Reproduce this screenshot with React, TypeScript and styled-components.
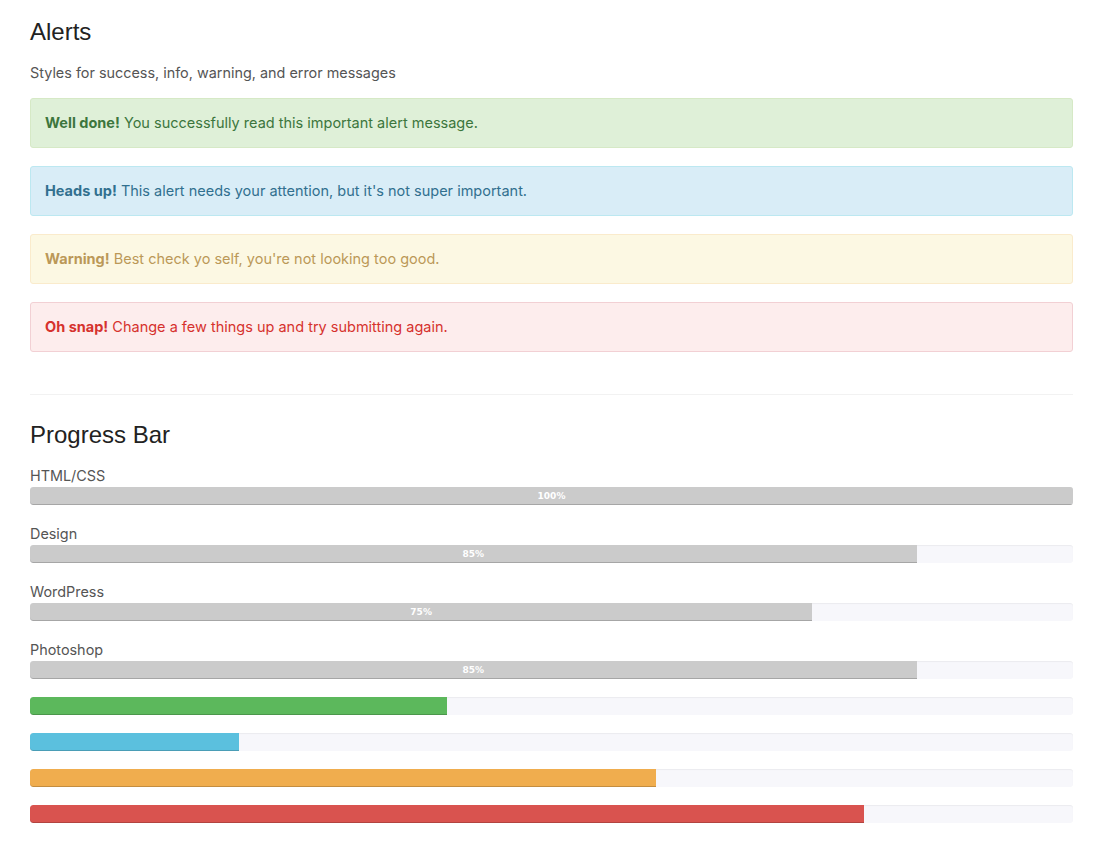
import React from 'react'
import styled, { createGlobalStyle } from 'styled-components'

const GlobalStyle = createGlobalStyle`
  html, body {
    margin: 0;
    padding: 0;
    background: #fff;
  }
  body {
    font-family: Inter, "Noto Sans", sans-serif;
    font-size: 14.5px;
    color: #555;
  }
`

type Tone = 'success' | 'info' | 'warning' | 'danger'

const tones: Record<Tone, { bg: string; border: string; text: string; bar: string }> = {
  success: { bg: '#dff0d8', border: '#d6e9c6', text: '#3c763d', bar: '#5cb85c' },
  info: { bg: '#d9edf7', border: '#bce8f1', text: '#31708f', bar: '#5bc0de' },
  warning: { bg: '#fcf8e3', border: '#faebcc', text: '#bb9858', bar: '#f0ad4e' },
  danger: { bg: '#fdeded', border: '#f2d0d4', text: '#d6322d', bar: '#d9534f' },
}

const Page = styled.div`
  padding: 14px 32px 40px 30px;
`

const Heading = styled.h2`
  font-family: "Liberation Sans", Arial, sans-serif;
  font-weight: 400;
  font-size: 24px;
  line-height: 36px;
  color: #222;
  margin: 0 0 13px;
`

const Lead = styled.p`
  margin: 0 0 15px;
  font-size: 14.4px;
  line-height: 20px;
  color: #555;
`

const AlertBox = styled.div<{ $tone: Tone }>`
  background: ${p => tones[p.$tone].bg};
  border: 1px solid ${p => tones[p.$tone].border};
  color: ${p => tones[p.$tone].text};
  border-radius: 3px;
  padding: 14px 14px;
  font-size: 14.5px;
  line-height: 20px;
  margin-bottom: 18px;

  strong {
    font-weight: 700;
  }
`

const Divider = styled.hr`
  border: 0;
  border-top: 1px solid #f2f2f2;
  margin: 42px 0 22px;
`

const SkillList = styled.div`
  margin-top: -1px;
`

const Label = styled.div`
  font-size: 14.4px;
  line-height: 22px;
  color: #555;
`

const Track = styled.div`
  height: 18px;
  background: #f7f7fb;
  border-radius: 3px;
  box-shadow: inset 0 1px 1px rgba(0, 0, 0, 0.05);
  overflow: hidden;
  margin-bottom: 18px;
`

const Fill = styled.div<{ $color: string }>`
  height: 100%;
  background: ${p => p.$color};
  box-shadow: inset 0 -1px 0 rgba(0, 0, 0, 0.18);
  border-radius: 3px 0 0 3px;
  display: flex;
  align-items: center;
  justify-content: center;
  color: #fff;
  font-family: "DejaVu Sans", Verdana, sans-serif;
  font-size: 9px;
  font-weight: 700;
`

const alerts: { tone: Tone; title: string; text: string }[] = [
  { tone: 'success', title: 'Well done!', text: 'You successfully read this important alert message.' },
  { tone: 'info', title: 'Heads up!', text: "This alert needs your attention, but it's not super important." },
  { tone: 'warning', title: 'Warning!', text: "Best check yo self, you're not looking too good." },
  { tone: 'danger', title: 'Oh snap!', text: 'Change a few things up and try submitting again.' },
]

const skills = [
  { name: 'HTML/CSS', value: 100 },
  { name: 'Design', value: 85 },
  { name: 'WordPress', value: 75 },
  { name: 'Photoshop', value: 85 },
]

const plain: { tone: Tone; value: number }[] = [
  { tone: 'success', value: 40 },
  { tone: 'info', value: 20 },
  { tone: 'warning', value: 60 },
  { tone: 'danger', value: 80 },
]

const App: React.FC = () => {
  return (
    <Page>
      <GlobalStyle />
      <Heading>Alerts</Heading>
      <Lead>Styles for success, info, warning, and error messages</Lead>
      {alerts.map((a, idx) => (
        <AlertBox $tone={a.tone} key={idx}>
          <strong>{a.title}</strong> {a.text}
        </AlertBox>
      ))}

      <Divider />

      <Heading>Progress Bar</Heading>
      <SkillList>
        {skills.map((s, idx) => (
          <div key={idx}>
            <Label>{s.name}</Label>
            <Track>
              <Fill $color="#cbcbcb" style={{ width: `${s.value}%` }}>
                {s.value}%
              </Fill>
            </Track>
          </div>
        ))}
        {plain.map((b, idx) => (
          <Track key={idx}>
            <Fill $color={tones[b.tone].bar} style={{ width: `${b.value}%` }} />
          </Track>
        ))}
      </SkillList>
    </Page>
  )
}

export default App
